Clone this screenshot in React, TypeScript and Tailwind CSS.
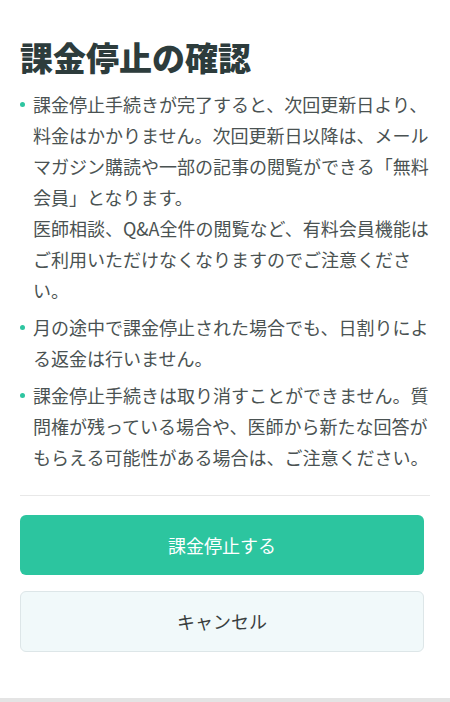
const items: string[][] = [
  [
    "課金停止手続きが完了すると、次回更新日より、料金はかかりません。次回更新日以降は、メールマガジン購読や一部の記事の閲覧ができる「無料会員」となります。",
    "医師相談、Q&A全件の閲覧など、有料会員機能はご利用いただけなくなりますのでご注意ください。",
  ],
  ["月の途中で課金停止された場合でも、日割りによる返金は行いません。"],
  [
    "課金停止手続きは取り消すことができません。質問権が残っている場合や、医師から新たな回答がもらえる可能性がある場合は、ご注意ください。",
  ],
];

export default function App() {
  return (
    <div
      className="w-[450px] h-[702px] bg-white flex flex-col"
      style={{ fontFamily: '"Noto Sans CJK JP", "Noto Sans", sans-serif' }}
    >
      <div className="flex-1 px-5 pt-[37px]">
        <h1 className="text-[33px] leading-[40px] font-black text-[#2d3c3c]">
          課金停止の確認
        </h1>

        <ul className="mt-3 flex flex-col gap-[6px]">
          {items.map((paras, i) => (
            <li key={i} className="flex">
              <div className="w-[13px] shrink-0 h-[31px] flex items-center">
                <span className="w-[5px] h-[5px] rounded-full bg-[#2ec5a0]" />
              </div>
              <div className="w-[397px] text-[18px] leading-[31px] text-[#4a5252]">
                {paras.map((p, j) => (
                  <p key={j}>{p}</p>
                ))}
              </div>
            </li>
          ))}
        </ul>

        <div className="mt-[22px] h-px bg-[#e8e8e8]" />

        <button className="mt-[19px] w-[404px] h-[60px] rounded-[6px] bg-[#2cc59f] text-white text-[18px] flex items-center justify-center">
          課金停止する
        </button>
        <button className="mt-4 w-[404px] h-[61px] rounded-[6px] bg-[#f1f9fa] border border-[#dde6e8] text-[#3a3f3f] text-[18px] flex items-center justify-center">
          キャンセル
        </button>
      </div>
      <div className="h-[4px] bg-[#e4e4e4]" />
    </div>
  );
}
